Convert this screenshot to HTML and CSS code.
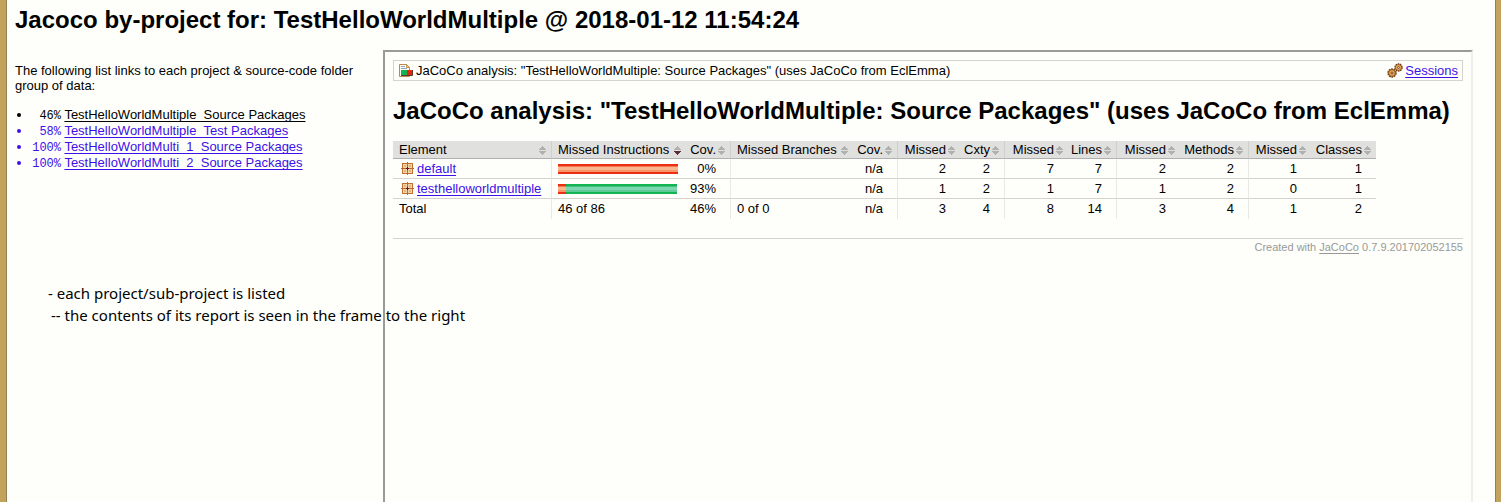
FILE: index.html
```
<!DOCTYPE html>
<html lang="en">
<head>
<meta charset="utf-8">
<title>Jacoco by-project</title>
<link rel="stylesheet" href="styles.css">
</head>
<body>
<svg class="defs" aria-hidden="true">
  <symbol id="sort" viewBox="0 0 7 9"><path class="up" d="M3 0h1v1h1v1h1v1h1v1H0V3h1V2h1V1h1z"/><path d="M0 5h7v1H6v1H5v1H4v1H3V8H2V7H1V6H0z"/></symbol>
  <symbol id="sorted" viewBox="0 0 7 9"><path fill="#b0b0ae" d="M3 0h1v1h1v1h1v1h1v1H0V3h1V2h1V1h1z"/><path fill="#583038" d="M0 5h7v1H6v1H5v1H4v1H3V8H2V7H1V6H0z"/></symbol>
  <symbol id="package" viewBox="0 0 13 13"><path fill="#c07030" d="M1 1h11v11H1z"/><path fill="#f3d6a8" d="M2 2h4v4H2zM7 2h4v4H7zM2 7h4v4H2zM7 7h4v4H7z"/><path fill="#e4b57c" d="M3 3h2v2H3zM8 3h2v2H8zM3 8h2v2H3zM8 8h2v2H8z"/><path fill="#b8682c" d="M6 0h1v13H6zM0 6h13v1H0z"/><path fill="#6b0f2a" d="M6 5h1v3H6zM5 6h3v1H5z"/></symbol>
  <symbol id="gear" viewBox="0 0 10 10"><circle cx="5" cy="5" r="4" fill="#e2a04c" stroke="#6d3517" stroke-width="1.4" stroke-dasharray="1.7 .8"/><circle cx="5" cy="5" r="3.300" fill="#e8ab58" stroke="#7c3f1a" stroke-width=".7"/><circle cx="5" cy="5" r="1" fill="#fff6dc" stroke="#6d3517" stroke-width=".9"/></symbol>
</svg>
<div class="page">
  <h1 class="title">Jacoco by-project for: TestHelloWorldMultiple @ 2018-01-12 11:54:24</h1>
  <div class="columns">
    <nav class="projects">
      <p class="intro">The following list links to each project &amp; source-code folder group of data:</p>
      <ul class="list">
        <li class="current"><span class="pct">46%</span> <a href="#">TestHelloWorldMultiple_Source Packages</a></li>
        <li><span class="pct">58%</span> <a href="#">TestHelloWorldMultiple_Test Packages</a></li>
        <li><span class="pct">100%</span> <a href="#">TestHelloWorldMulti_1_Source Packages</a></li>
        <li><span class="pct">100%</span> <a href="#">TestHelloWorldMulti_2_Source Packages</a></li>
      </ul>
      <div class="note">
        <div>- each project/sub-project is listed</div>
        <div class="sub">-- the contents of its report is seen in the frame to the right</div>
      </div>
    </nav>
    <main class="report">
      <div class="breadcrumb">
        <span class="crumb"><svg class="icon" width="16" height="16" viewBox="0 0 16 16" fill="none"><path fill="#fffdf5" stroke="#b98a48" d="M1.500 1.500h7l3 3v9h-10z"/><path fill="#f0cf92" stroke="#c79346" d="M8.500 1.500v3h3z"/><path stroke="#8fa8c8" d="M3 3.500h4M3 5.500h6"/><path fill="#16b34c" d="M3 7h6v5H3z"/><path fill="#e8240f" d="M9 7h5v5H9z"/><path stroke="#5c3c30" d="M3 12.500h11.500V7"/></svg><span>JaCoCo analysis: "TestHelloWorldMultiple: Source Packages" (uses JaCoCo from EclEmma)</span></span>
        <span class="crumb"><svg class="icon" width="16" height="16" viewBox="0 0 16 16"><use href="#gear" x="0" y="5" width="10" height="10"/><use href="#gear" x="7" y="0" width="9" height="9"/></svg><a href="#">Sessions</a></span>
      </div>
      <h1 class="heading">JaCoCo analysis: "TestHelloWorldMultiple: Source Packages" (uses JaCoCo from EclEmma)</h1>
      <table class="coverage">
        <colgroup><col class="c158"><col class="c135"><col class="c44"><col class="c123"><col class="c44"><col class="c63"><col class="c44"><col class="c64"><col class="c48"><col class="c64"><col class="c68"><col class="c63"><col class="c65"></colgroup>
        <thead>
          <tr>
            <th class="left">Element<svg class="sort"><use href="#sort"/></svg></th>
            <th class="left bar">Missed Instructions<svg class="sort"><use href="#sorted"/></svg></th>
            <th>Cov.<svg class="sort"><use href="#sort"/></svg></th>
            <th class="left bar">Missed Branches<svg class="sort"><use href="#sort"/></svg></th>
            <th>Cov.<svg class="sort"><use href="#sort"/></svg></th>
            <th class="bar">Missed<svg class="sort"><use href="#sort"/></svg></th>
            <th>Cxty<svg class="sort"><use href="#sort"/></svg></th>
            <th class="bar">Missed<svg class="sort"><use href="#sort"/></svg></th>
            <th>Lines<svg class="sort"><use href="#sort"/></svg></th>
            <th class="bar">Missed<svg class="sort"><use href="#sort"/></svg></th>
            <th>Methods<svg class="sort"><use href="#sort"/></svg></th>
            <th class="bar">Missed<svg class="sort"><use href="#sort"/></svg></th>
            <th>Classes<svg class="sort"><use href="#sort"/></svg></th>
          </tr>
        </thead>
        <tbody>
          <tr><td class="left"><span class="element"><svg class="package"><use href="#package"/></svg><a href="#">default</a></span></td><td class="left bar"><div class="meter"><i class="red" style="width:120px"></i></div></td><td>0%</td><td class="left bar"></td><td>n/a</td><td class="bar">2</td><td>2</td><td class="bar">7</td><td>7</td><td class="bar">2</td><td>2</td><td class="bar">1</td><td>1</td></tr>
          <tr><td class="left"><span class="element"><svg class="package"><use href="#package"/></svg><a href="#">testhelloworldmultiple</a></span></td><td class="left bar"><div class="meter"><i class="red" style="width:8px"></i><i class="green" style="width:111px"></i></div></td><td>93%</td><td class="left bar"></td><td>n/a</td><td class="bar">1</td><td>2</td><td class="bar">1</td><td>7</td><td class="bar">1</td><td>2</td><td class="bar">0</td><td>1</td></tr>
        </tbody>
        <tfoot>
          <tr><td class="left">Total</td><td class="left bar">46 of 86</td><td>46%</td><td class="left bar">0 of 0</td><td>n/a</td><td class="bar">3</td><td>4</td><td class="bar">8</td><td>14</td><td class="bar">3</td><td>4</td><td class="bar">1</td><td>2</td></tr>
        </tfoot>
      </table>
      <footer class="footer">Created with <a href="#">JaCoCo</a> 0.7.9.201702052155</footer>
    </main>
  </div>
</div>
</body>
</html>
```
FILE: styles.css
```
* { box-sizing: border-box; }
body {
  margin: 0;
  background: #c1a35b;
  color: #000;
  font: 13px/16px "Liberation Sans", Arial, sans-serif;
}
a {
  color: #4010e8;
  text-decoration: underline;
  text-decoration-skip-ink: none;
  text-underline-offset: 2px;
}
.defs { position: absolute; width: 0; height: 0; }
.page {
  display: flex;
  flex-direction: column;
  min-height: 100vh;
  margin: 0 5px 0 6px;
  padding: 6px 22px 0 8px;
  border: solid #978055;
  border-width: 0 1px;
  background: #fefffa;
}
h1 { margin: 0; font-size: 24px; line-height: 28px; font-weight: bold; }
.columns { display: flex; flex: 1; margin-top: 16px; }
.projects { position: relative; flex: 0 0 368px; padding-top: 13px; }
.intro { margin: 0 14px 0 0; line-height: 15px; }
.list { margin: 14px 0 0; padding-left: 17px; color: #4010e8; }
.list .current, .current a { color: #000; }
.pct {
  display: inline-block;
  width: 29px;
  font: 12px/14px "Liberation Mono", "Courier New", monospace;
  text-align: right;
}
.note {
  position: absolute;
  top: 232px;
  left: 33px;
  z-index: 1;
  font: 15px/22px "Noto Sans", "Open Sans", sans-serif;
  white-space: nowrap;
}
.note .sub { padding-left: 3px; }
.report {
  flex: 1;
  min-width: 0;
  padding: 8px;
  border: 2px solid #9a9a96;
  border-right-color: #eeeeeb;
  border-bottom: 0;
}
.breadcrumb {
  display: flex;
  justify-content: space-between;
  padding: 1px 4px;
  border: 1px solid #d6d3ce;
}
.crumb { display: flex; align-items: center; gap: 2px; line-height: 17px; }
.heading { margin: 16px 0; white-space: nowrap; }
.coverage { width: 983px; table-layout: fixed; border-collapse: separate; border-spacing: 0; }
.c44 { width: 44px; }
.c48 { width: 48px; }
.c63 { width: 63px; }
.c64 { width: 64px; }
.c65 { width: 65px; }
.c68 { width: 68px; }
.c123 { width: 123px; }
.c135 { width: 135px; }
.c158 { width: 158px; }
th, td { text-align: right; white-space: nowrap; }
th {
  position: relative;
  padding: 1px 14px 1px 0;
  border-bottom: 1px solid #b0b0b0;
  background: #e0e0df;
  font-weight: normal;
  line-height: 15px;
}
td { height: 20px; padding: 0 14px 0 2px; border-bottom: 1px solid #d6d3ce; line-height: 19px; }
td.bar { border-left: 1px solid #e9e8e5; }
th.bar { border-left: 1px solid #cfcfcd; }
th.left, td.left { padding-left: 6px; padding-right: 0; text-align: left; }
tfoot td { border-bottom: 0; vertical-align: top; }
.sort { position: absolute; top: 5px; right: 5px; width: 7px; height: 9px; fill: #b0b0ae; }
.element { display: flex; align-items: center; gap: 3px; padding-left: 2px; }
.package { width: 13px; height: 13px; }
.meter { display: flex; height: 10px; }
.red { background: linear-gradient(#ee2e12 0 2px, #f37a4a 2px 3px, #f8b78f 3px 6px, #f79769 6px 8px, #ee2e12 8px); }
.green { background: linear-gradient(#14b353 0 2px, #42c27c 2px 3px, #7cd6b0 3px 6px, #5fcb99 6px 8px, #14b353 8px); }
.footer {
  margin-top: 19px;
  border-top: 1px solid #d6d3ce;
  color: #999;
  font-size: 11px;
  line-height: 16px;
  text-align: right;
}
.footer a { color: #999; }
```
